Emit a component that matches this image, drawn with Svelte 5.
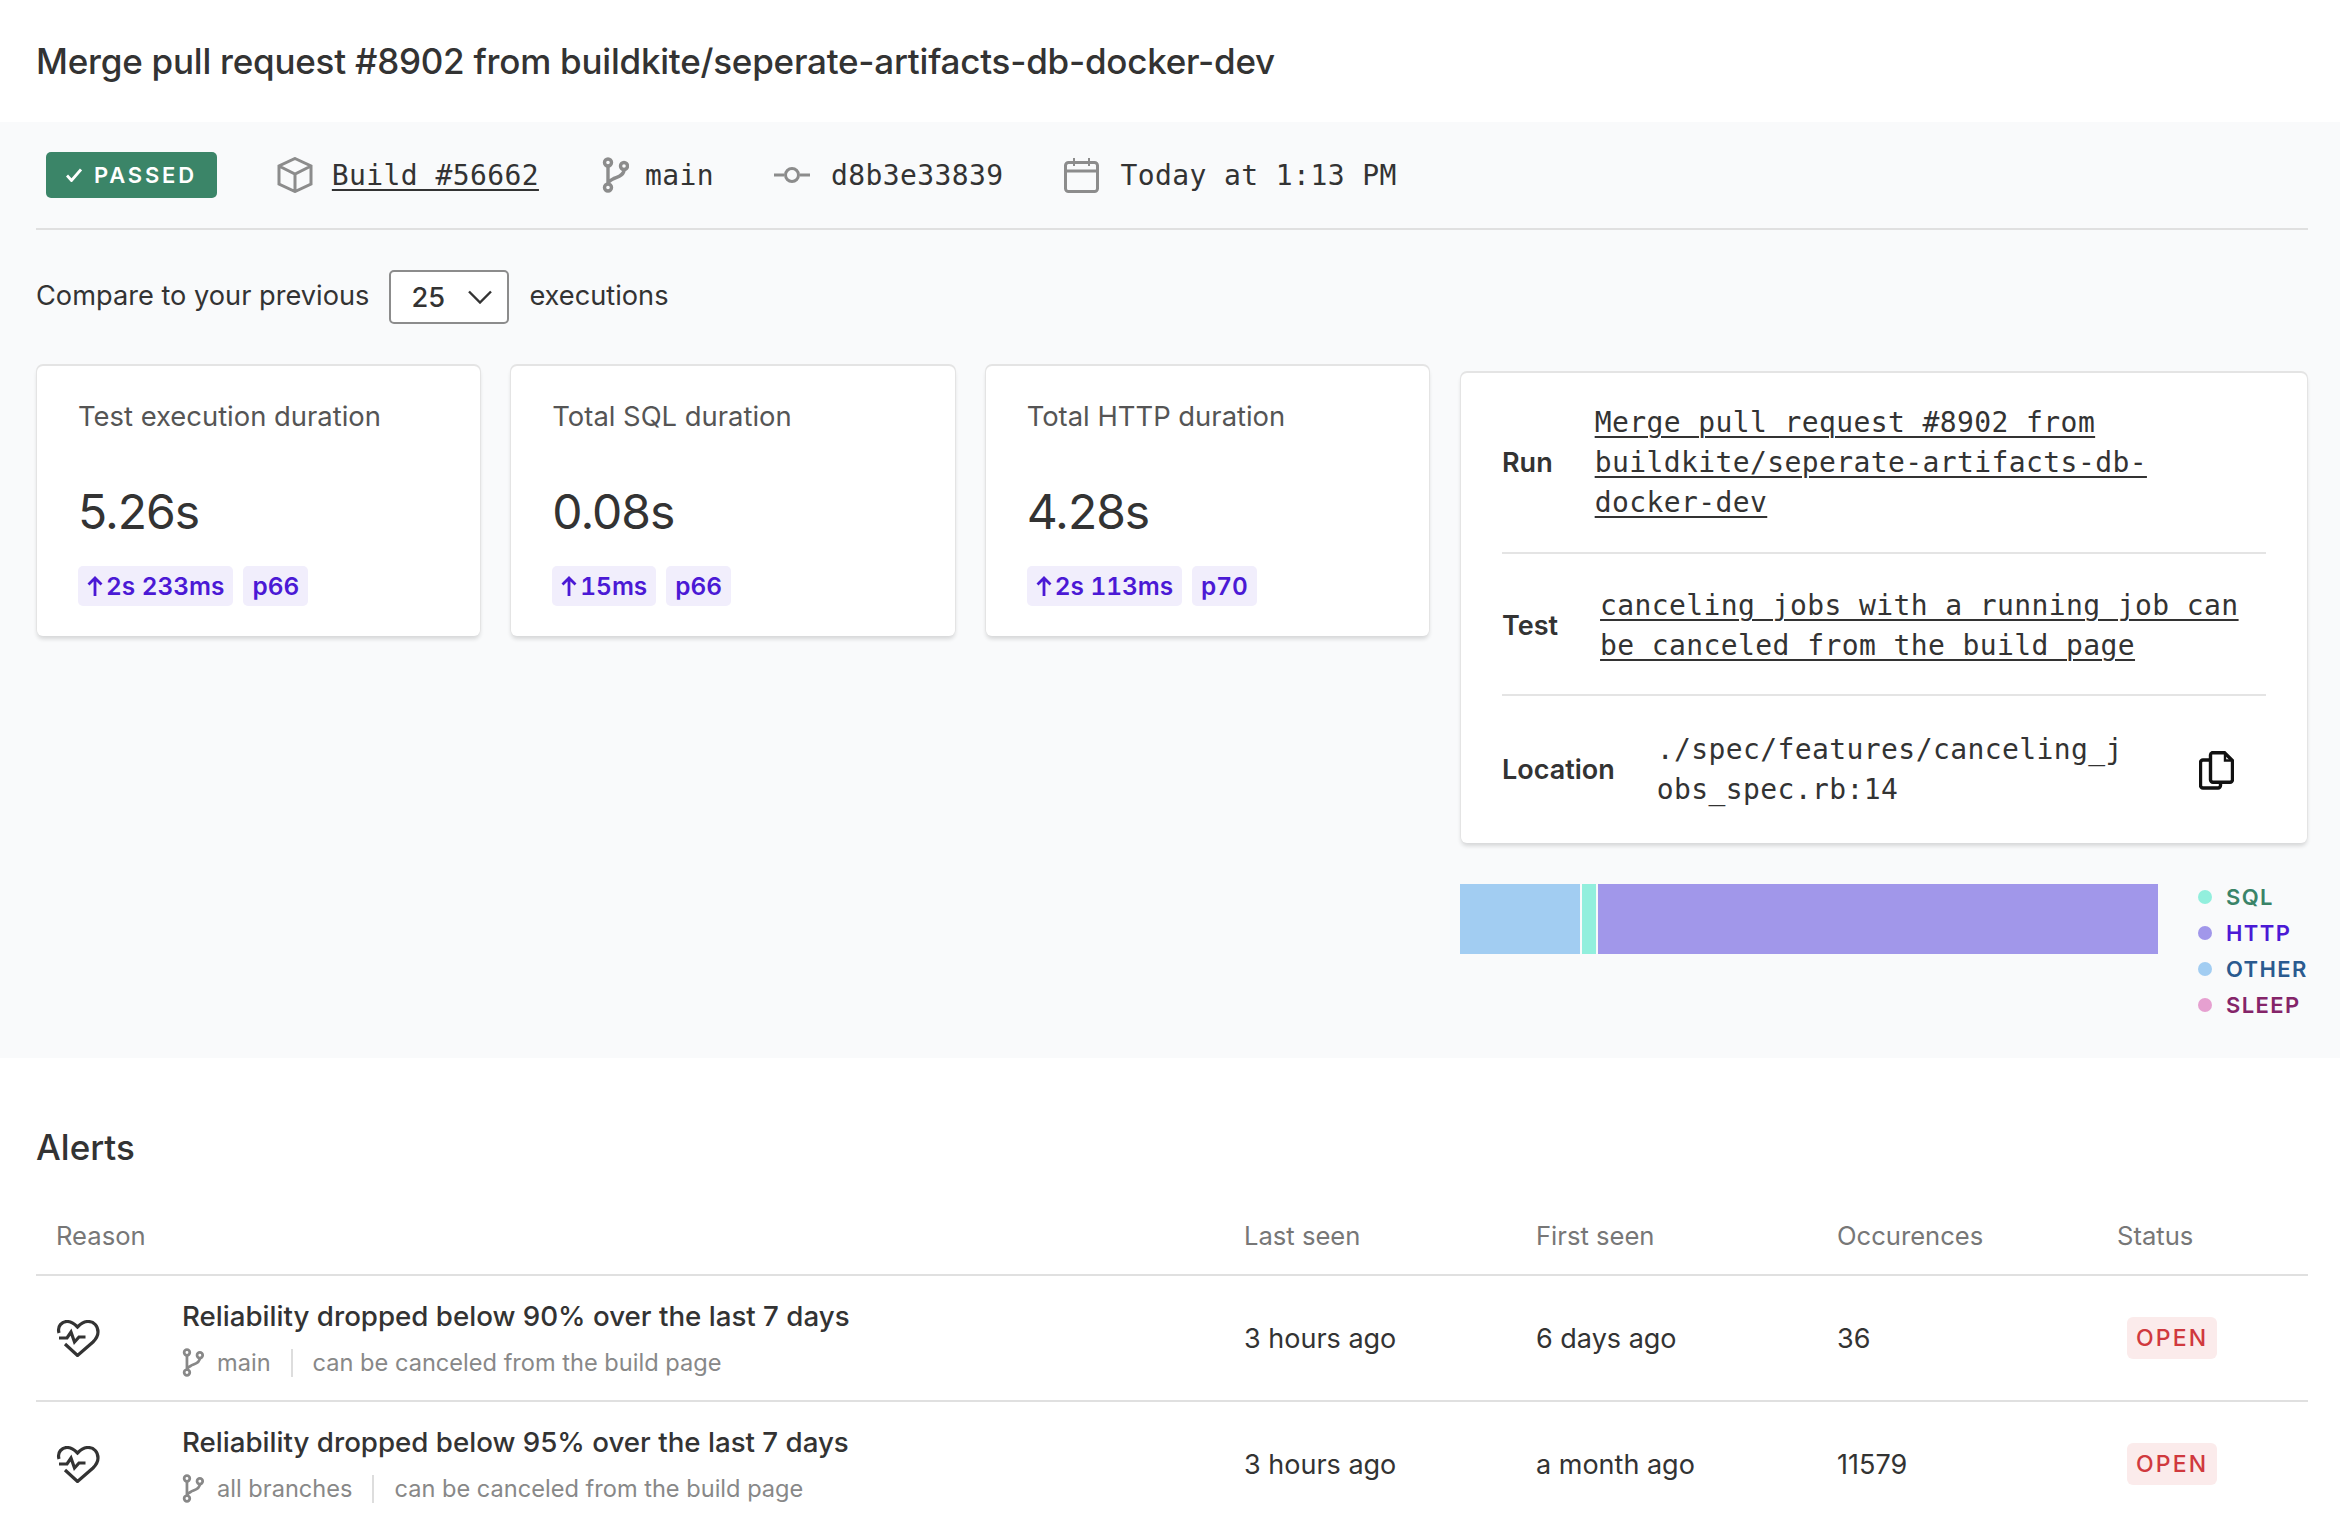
<script>
  const metrics = [
    { title: "Test execution duration", value: "5.26s", delta: "2s 233ms", pct: "p66" },
    { title: "Total SQL duration", value: "0.08s", delta: "15ms", pct: "p66" },
    { title: "Total HTTP duration", value: "4.28s", delta: "2s 113ms", pct: "p70" }
  ];

  const legend = [
    { label: "SQL", dot: "#92efdd", text: "#3a8468" },
    { label: "HTTP", dot: "#a197ea", text: "#4b19d5" },
    { label: "Other", dot: "#a2cdf2", text: "#2a5a8f" },
    { label: "Sleep", dot: "#e6a0d0", text: "#842469" }
  ];

  const alerts = [
    { reason: "Reliability dropped below 90% over the last 7 days", branch: "main", last: "3 hours ago", first: "6 days ago", count: "36" },
    { reason: "Reliability dropped below 95% over the last 7 days", branch: "all branches", last: "3 hours ago", first: "a month ago", count: "11579" }
  ];
</script>

{#snippet branchIcon(cls)}
  <svg class={cls} viewBox="0 0 27 36" fill="none" stroke="currentColor" stroke-width="3.4">
    <circle cx="6" cy="5.5" r="3.5" />
    <circle cx="6" cy="30.5" r="3.5" />
    <circle cx="22" cy="9" r="3.5" />
    <path d="M6 9v18M22 12.5c0 7-8 7.500-11 9.500-3 1.500-5 3-5 5" />
  </svg>
{/snippet}

<div class="page">
  <header class="title-bar">
    <h1>Merge pull request #8902 from buildkite/seperate-artifacts-db-docker-dev</h1>
  </header>

  <section class="summary">
    <div class="meta">
      <span class="passed">
        <svg class="passed-check" viewBox="0 0 16 14" fill="none" stroke="currentColor" stroke-width="2.8">
          <path d="M1 7.500l4.500 5L15 1.500" />
        </svg>
        Passed
      </span>
      <span class="meta-item build">
        <svg class="icon-cube" viewBox="0 0 36 36" fill="none" stroke="currentColor" stroke-width="3">
          <path d="M18 1.500L34 9v18l-16 7.500L2 27V9zM2 9l16 8 16-8M18 17v17.500" />
        </svg>
        <a class="mono-link" href="#build">Build #56662</a>
      </span>
      <span class="meta-item branch">
        {@render branchIcon("icon-branch")}
        main
      </span>
      <span class="meta-item commit">
        <svg class="icon-commit" viewBox="0 0 36 16" fill="none" stroke="currentColor" stroke-width="3">
          <circle cx="18" cy="8" r="6.500" />
          <path d="M0 8h10M26 8h10" />
        </svg>
        d8b3e33839
      </span>
      <span class="meta-item">
        <svg class="icon-calendar" viewBox="0 0 35 35" fill="none" stroke="currentColor" stroke-width="3">
          <rect x="1.500" y="4.500" width="32" height="29" rx="3" />
          <path d="M1.500 13h32" />
          <path d="M10 0v8M25 0v8" stroke-width="2" />
        </svg>
        Today at 1:13 PM
      </span>
    </div>

    <div class="compare">
      <span>Compare to your previous</span>
      <div class="select">
        <span>25</span>
        <svg viewBox="0 0 24 14" fill="none" stroke="#333" stroke-width="2.400">
          <path d="M1 1.500l11 11 11-11" />
        </svg>
      </div>
      <span>executions</span>
    </div>

    <div class="columns">
      <div class="metrics">
        {#each metrics as m}
          <div class="card metric">
            <div class="metric-title">{m.title}</div>
            <div class="metric-value">{m.value}</div>
            <div class="chips">
              <span class="chip">
                <svg viewBox="0 0 16 20" fill="none" stroke="currentColor" stroke-width="2.800">
                  <path d="M8 20V2M1.500 8.500L8 2l6.500 6.500" />
                </svg>
                {m.delta}
              </span>
              <span class="chip">{m.pct}</span>
            </div>
          </div>
        {/each}
      </div>

      <div class="side">
        <div class="card info">
          <div class="info-row">
            <span class="info-label">Run</span>
            <a class="mono-link" href="#run">Merge pull request #8902 from buildkite/seperate-artifacts-db-docker-dev</a>
          </div>
          <div class="info-row">
            <span class="info-label">Test</span>
            <a class="mono-link" href="#test">canceling jobs with a running job can be canceled from the build page</a>
          </div>
          <div class="info-row">
            <span class="info-label">Location</span>
            <span class="location">./spec/features/canceling_jobs_spec.rb:14</span>
            <svg class="icon-copy" viewBox="0 0 35 39" fill="none" stroke="#111" stroke-width="3.400">
              <path d="M11 9H4a2.500 2.500 0 0 0-2.500 2.500v23A2.500 2.500 0 0 0 4 37h15a2.500 2.500 0 0 0 2.500-2.500V31" />
              <path d="M13 1.700h12.500l8 8v19a2.500 2.500 0 0 1-2.500 2.500H14a2.500 2.500 0 0 1-2.500-2.500V4a2.500 2.500 0 0 1 1.500-2.300z" />
              <path d="M26 2v7.500h7" stroke-width="2.400" />
            </svg>
          </div>
        </div>

        <div class="timing">
          <div class="bar">
            <span class="seg seg-other"></span>
            <span class="seg seg-sql"></span>
            <span class="seg seg-http"></span>
          </div>
          <ul class="legend">
            {#each legend as l}
              <li style="color: {l.text}">
                <span class="dot" style="background: {l.dot}"></span>
                {l.label}
              </li>
            {/each}
          </ul>
        </div>
      </div>
    </div>
  </section>

  <section class="alerts">
    <h2>Alerts</h2>
    <div class="row head">
      <div>Reason</div>
      <div>Last seen</div>
      <div>First seen</div>
      <div>Occurences</div>
      <div>Status</div>
    </div>
    {#each alerts as a}
      <div class="row">
        <div class="reason">
          <svg class="icon-heart" viewBox="0 0 44 37" fill="none" stroke="#333" stroke-width="3.200">
            <path d="M3 13C1 6 6 1.500 11 1.500c4 0 7 2 10.500 5.500C25 3.500 28 1.500 32 1.500c6 0 10 4.500 10 10.500 0 4-2 7-5 10L21.500 35.500 9 24" />
            <path d="M3 18h8l4-6 3.500 10 4.500-5h6.500" />
          </svg>
          <div>
            <div class="reason-title">{a.reason}</div>
            <div class="reason-sub">
              {@render branchIcon("icon-branch-small")}
              <span>{a.branch}</span>
              <span class="sep"></span>
              <span>can be canceled from the build page</span>
            </div>
          </div>
        </div>
        <div>{a.last}</div>
        <div>{a.first}</div>
        <div>{a.count}</div>
        <div><span class="open">Open</span></div>
      </div>
    {/each}
  </section>
</div>

<style>
  :global(body) {
    margin: 0;
    background: #fff;
  }

  .page {
    height: 100vh;
    overflow: hidden;
    font-family: Inter, "Liberation Sans", sans-serif;
    font-size: 27px;
    color: #333;
  }

  .title-bar {
    height: 122px;
    padding: 0 36px;
    display: flex;
    align-items: center;
  }

  h1 {
    margin: 0;
    font-size: 35px;
    font-weight: 500;
    letter-spacing: -0.23px;
  }

  .summary {
    height: 936px;
    padding: 30px 32px 0 36px;
    box-sizing: border-box;
    background: #f9fafb;
  }

  .meta {
    display: flex;
    align-items: center;
    gap: 60px;
    height: 46px;
    padding: 0 0 30px 10px;
    border-bottom: 2px solid #e0e0e0;
    font-family: "DejaVu Sans Mono", monospace;
    font-size: 28px;
    letter-spacing: 0.4px;
  }

  .meta-item {
    display: flex;
    align-items: center;
    gap: 22px;
  }

  .meta-item svg {
    color: #8c8c8c;
    display: block;
    flex: none;
  }

  .meta-item.build {
    gap: 19px;
  }

  .meta-item.branch {
    gap: 16px;
    margin-left: 3px;
  }

  .meta-item.commit {
    gap: 21px;
  }

  .icon-cube {
    width: 36px;
    height: 36px;
  }

  .icon-branch {
    width: 27px;
    height: 36px;
  }

  .icon-commit {
    width: 36px;
    height: 16px;
  }

  .icon-calendar {
    width: 35px;
    height: 35px;
  }

  .passed {
    display: flex;
    align-items: center;
    gap: 12px;
    height: 46px;
    padding: 0 20px;
    box-sizing: border-box;
    border-radius: 5px;
    background: #3b8568;
    color: #fff;
    font-family: Inter, sans-serif;
    font-size: 22px;
    font-weight: 600;
    letter-spacing: 2.8px;
    text-transform: uppercase;
  }

  .passed-check {
    width: 16px;
    height: 14px;
  }

  .mono-link {
    color: #333;
    text-decoration: underline;
    text-underline-offset: 4px;
    text-decoration-thickness: 2px;
  }

  .compare {
    display: flex;
    align-items: center;
    gap: 20px;
    margin-top: 40px;
    height: 54px;
    font-size: 27.2px;
  }

  .compare > span {
    margin-bottom: 3px;
  }

  .select {
    display: flex;
    align-items: center;
    justify-content: space-between;
    width: 120px;
    height: 54px;
    padding: 0 15px 0 20px;
    box-sizing: border-box;
    border: 2px solid #8c8c8c;
    border-radius: 5px;
    background: #fff;
    font-weight: 500;
  }

  .select svg {
    width: 24px;
    height: 14px;
  }

  .columns {
    display: flex;
    gap: 30px;
    margin-top: 42px;
    align-items: flex-start;
  }

  .metrics {
    display: grid;
    grid-template-columns: repeat(3, 1fr);
    gap: 31px;
    width: 1394px;
    padding: 0 1px;
    box-sizing: border-box;
  }

  .card {
    background: #fff;
    border-radius: 6px;
    box-shadow: 0 -1px 0 1px #e4e4e4, 0 3px 4px rgba(0, 0, 0, 0.14);
  }

  .metric {
    height: 270px;
    padding: 33px 41px 0;
    box-sizing: border-box;
  }

  .metric-title {
    color: #555;
    font-size: 27.4px;
    line-height: 34px;
  }

  .metric-value {
    margin-top: 51px;
    font-size: 48px;
    letter-spacing: -1px;
    line-height: 56px;
  }

  .chips {
    display: flex;
    gap: 10px;
    margin-top: 26px;
  }

  .chip {
    display: flex;
    align-items: center;
    gap: 3px;
    height: 40px;
    padding: 0 9px;
    border-radius: 5px;
    background: #f1eefc;
    color: #4b19d5;
    font-size: 24.4px;
    font-weight: 600;
    font-variant-numeric: tabular-nums;
  }

  .chip svg {
    width: 16px;
    height: 20px;
  }

  .side {
    flex: 1;
    margin-top: 7px;
  }

  .info {
    margin: 0 1px;
    padding: 0 41px;
  }

  .info-row {
    display: flex;
    align-items: center;
    gap: 42px;
    padding: 30px 0 29px;
    border-bottom: 2px solid #e4e4e4;
    font-family: "DejaVu Sans Mono", monospace;
    font-size: 28px;
    letter-spacing: 0.4px;
    line-height: 40px;
  }

  .info-row:nth-child(2) {
    padding: 32px 0 28px;
  }

  .info-row:last-child {
    border-bottom: 0;
    padding: 34px 0 33px;
  }

  .info-label {
    flex: none;
    font-family: Inter, sans-serif;
    font-size: 27px;
    font-weight: 600;
    letter-spacing: 0;
  }

  .location {
    width: 472px;
    flex: none;
    word-break: break-all;
  }

  .icon-copy {
    width: 35px;
    height: 39px;
    margin-left: auto;
    margin-right: 32px;
  }

  .timing {
    display: flex;
    justify-content: space-between;
    margin-top: 41px;
  }

  .bar {
    display: flex;
    gap: 2px;
    width: 698px;
    height: 70px;
  }

  .seg-other {
    width: 120px;
    background: #a2cdf2;
  }

  .seg-sql {
    width: 14px;
    background: #92efdd;
  }

  .seg-http {
    flex: 1;
    background: #a197ea;
  }

  .legend {
    list-style: none;
    margin: -5px 0 0;
    padding: 0;
    width: 110px;
    font-size: 22px;
    font-weight: 600;
    letter-spacing: 1.4px;
    text-transform: uppercase;
    line-height: 36px;
  }

  .legend li {
    display: flex;
    align-items: center;
    gap: 14px;
    white-space: nowrap;
  }

  .dot {
    width: 14px;
    height: 14px;
    border-radius: 50%;
    flex: none;
  }

  .alerts {
    padding: 0 32px 0 36px;
  }

  h2 {
    margin: 0;
    padding-top: 69px;
    font-size: 35px;
    font-weight: 500;
    line-height: 40px;
  }

  .row {
    display: grid;
    grid-template-columns: 1188px 292px 301px 280px 207px;
    align-items: center;
    height: 124px;
    border-top: 2px solid #e0e0e0;
  }

  .row > div {
    padding-left: 20px;
  }

  .row.head {
    height: 107px;
    box-sizing: border-box;
    align-items: end;
    padding-bottom: 22px;
    border-top: 0;
    color: #777;
    font-size: 25.6px;
    line-height: 32px;
  }

  .reason {
    display: flex;
    align-items: center;
    gap: 82px;
  }

  .icon-heart {
    width: 44px;
    height: 37px;
    flex: none;
  }

  .reason-title {
    font-weight: 500;
    font-size: 27.7px;
    line-height: 34px;
  }

  .reason-sub {
    display: flex;
    align-items: center;
    margin-top: 15px;
    color: #888;
    font-size: 23.6px;
    line-height: 30px;
  }

  :global(.icon-branch-small) {
    width: 22px;
    height: 29px;
    margin-right: 13px;
  }

  .sep {
    width: 2px;
    height: 28px;
    margin: 0 20px;
    background: #ddd;
  }

  .open {
    display: inline-flex;
    align-items: center;
    height: 42px;
    margin-left: 10px;
    padding: 0 9px;
    border-radius: 6px;
    background: #fbebeb;
    color: #d0393e;
    font-size: 23px;
    font-weight: 500;
    letter-spacing: 2.2px;
    text-transform: uppercase;
  }
</style>
